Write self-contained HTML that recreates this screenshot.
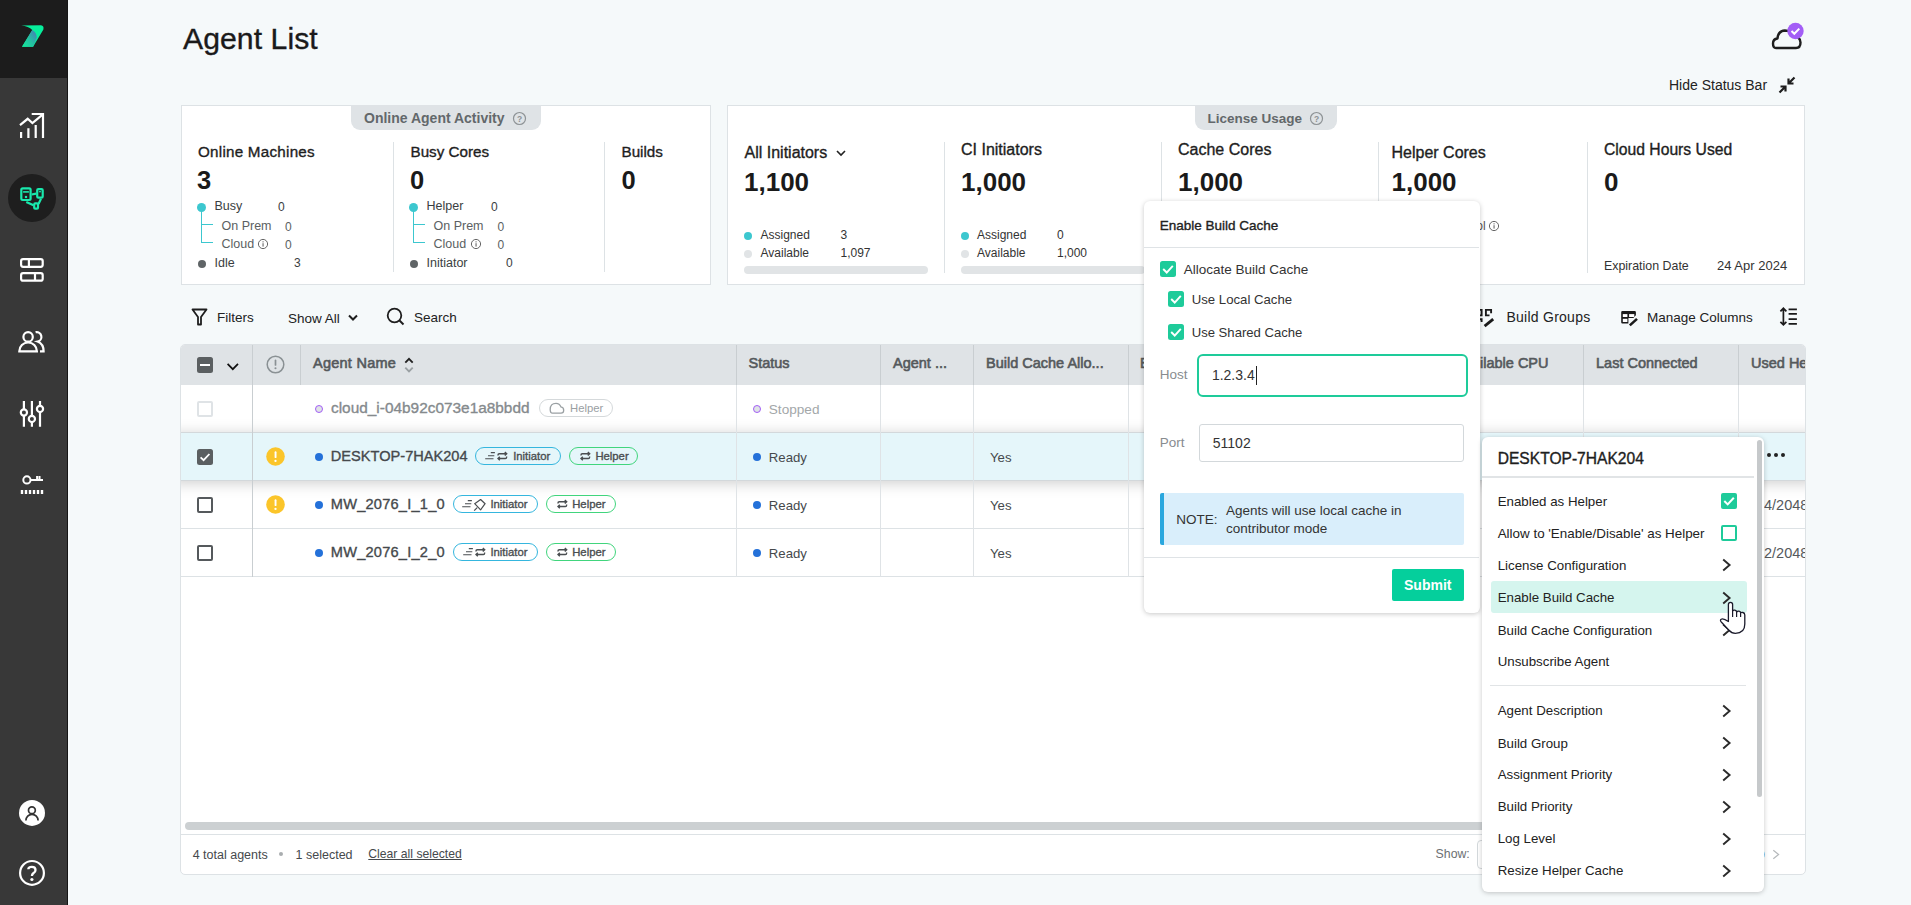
<!DOCTYPE html><html><head><meta charset="utf-8"><style>
html,body{margin:0;padding:0;width:1911px;height:905px;overflow:hidden;background:#f5f9fa;font-family:"Liberation Sans",sans-serif;}
.t{position:absolute;line-height:1;white-space:nowrap;}
.r{position:absolute;box-sizing:border-box;}
</style></head><body>
<div class="r" style="left:0px;top:0px;width:68px;height:905px;background:#383838;"></div>
<div class="r" style="left:67px;top:0px;width:1px;height:905px;background:#151515;"></div>
<div class="r" style="left:0px;top:0px;width:67px;height:78px;background:#1c1c1c;"></div>
<svg class="r" style="left:14px;top:18px;" width="36" height="36" viewBox="0 0 36 36"><defs><linearGradient id="lg" x1="0.1" y1="1" x2="0.9" y2="0.3"><stop offset="0" stop-color="#14e59a"/><stop offset="0.55" stop-color="#25c0a2"/><stop offset="1" stop-color="#3d8fb0"/></linearGradient></defs>
<path d="M7.2 7.4 L27 7.2 Q30.2 7.6 29.4 11.4 L19.1 28.7 L8 28.7 L18.3 11.9 Q14.5 7.9 7.2 7.4 Z" fill="#07ee9c"/>
<path d="M18.3 11.9 Q22.8 14.5 22.8 19.8 L19.1 28.7 L8 28.7 Z" fill="url(#lg)"/></svg>
<svg class="r" style="left:18px;top:110px;" width="28" height="30" viewBox="0 0 28 30"><g fill="none" stroke="#fff" stroke-width="2.2"><path d="M3.1 28 V22.1 M10.4 28 V18.3 M17.7 28 V15 M25 28 V4 M13.7 4 H26.1"/><path d="M2 15.2 L9.7 8.8 L14.4 13 L24.3 4.8" stroke-linejoin="miter"/></g></svg>
<div class="r" style="left:8px;top:174px;width:48px;height:48px;background:#1e1e1e;border-radius:50%;"></div>
<svg class="r" style="left:14px;top:180px;" width="36" height="36" viewBox="0 0 36 36"><g fill="none" stroke="#19e9ad" stroke-width="2.2"><rect x="7.3" y="8.3" width="9.3" height="11.7" rx="1.4"/><rect x="23.2" y="9.1" width="5.5" height="8.5" rx="1.2"/><rect x="20.2" y="23.4" width="3.8" height="5.3" rx="1"/><path d="M17.7 14.5 L22.1 13.7 M12.3 21.9 L19.5 25.3 M27 18.7 L24.5 23.9"/></g><g fill="#19e9ad"><rect x="9.1" y="11.1" width="5.8" height="1.6"/><rect x="10.9" y="15.9" width="2.2" height="2.2"/><rect x="24.9" y="11.1" width="2.1" height="1.2"/></g></svg>
<svg class="r" style="left:14px;top:252px;" width="36" height="36" viewBox="0 0 36 36"><g fill="none" stroke="#fff" stroke-width="2.2"><rect x="7.1" y="7.1" width="21.6" height="7.7" rx="2"/><rect x="7.1" y="21.2" width="21.6" height="7.5" rx="2"/><path d="M14.9 7.1 V14.8 M21 21.2 V28.7"/></g></svg>
<svg class="r" style="left:14px;top:324px;" width="36" height="36" viewBox="0 0 36 36"><g fill="none" stroke="#fff" stroke-width="2.2"><circle cx="14.1" cy="12.9" r="4.7"/><path d="M5.3 27.3 A8.8 8.8 0 0 1 22.9 27.3 Z"/><path d="M21.6 8.2 A4.7 4.7 0 0 1 23.6 17.6 Q29.6 20 29.6 27.3 H26"/></g></svg>
<svg class="r" style="left:14px;top:396px;" width="36" height="36" viewBox="0 0 36 36"><g fill="none" stroke="#fff" stroke-width="2.2"><path d="M9.9 5 V13.4 M9.9 19.6 V30.8 M17.9 5 V19.8 M17.9 26 V30.8 M26 5 V9.8 M26 16 V30.8"/><circle cx="9.9" cy="16.5" r="3.1"/><circle cx="17.9" cy="22.9" r="3.1"/><circle cx="26" cy="12.9" r="3.1"/></g></svg>
<svg class="r" style="left:14px;top:467px;" width="36" height="36" viewBox="0 0 36 36"><g fill="none" stroke="#fff" stroke-width="2"><circle cx="12.9" cy="12.9" r="3.6"/><path d="M16.5 12.9 H29 M23.1 9 V12.9 M25.5 9 V12.9"/></g><path d="M6.8 25 H29.4" stroke="#fff" stroke-width="4" stroke-dasharray="2.4 1.6"/></svg>
<svg class="r" style="left:14px;top:795px;" width="36" height="36" viewBox="0 0 36 36"><circle cx="18" cy="17.9" r="13" fill="#fff"/><g fill="none" stroke="#333" stroke-width="1.7"><circle cx="17.9" cy="15.3" r="3.4"/><path d="M11.9 25.6 A6.1 6.3 0 0 1 24.1 25.6"/></g></svg>
<svg class="r" style="left:14px;top:855px;" width="36" height="36" viewBox="0 0 36 36"><circle cx="18" cy="17.9" r="11.9" fill="none" stroke="#fff" stroke-width="2.2"/><path d="M14.3 14.3 Q14.3 11.8 17.9 11.8 Q21.5 11.8 21.5 14.9 Q21.5 16.8 19.6 18 Q17.9 19.2 17.9 21" fill="none" stroke="#fff" stroke-width="2.3"/><circle cx="17.9" cy="24.5" r="1.6" fill="#fff"/></svg>
<div class="t" style="left:183px;top:24.23px;font-size:30.2px;color:#1a1a1a;font-weight:400;-webkit-text-stroke:0.35px #1a1a1a;letter-spacing:0.05px;">Agent List</div>
<svg class="r" style="left:1771px;top:22px;" width="36" height="28" viewBox="0 0 36 28"><path d="M5 26 Q2 26 2 21.5 Q2 17 6.5 16.5 Q7 9 14 8.5 Q20 8.5 22 14 Q29 14 29.5 20.5 Q29.5 26 25 26 Z" fill="none" stroke="#1e1e1e" stroke-width="2.4" stroke-linejoin="round"/><circle cx="24.5" cy="9" r="8.2" fill="#a35ef6"/><path d="M20.5 9 L23.3 11.8 L28.3 6.6" fill="none" stroke="#fff" stroke-width="2"/></svg>
<div class="t" style="left:1669px;top:77.65px;font-size:14px;color:#222;font-weight:400;">Hide Status Bar</div>
<svg class="r" style="left:1778px;top:76px;" width="18" height="18" viewBox="0 0 18 18"><g fill="none" stroke="#1e1e1e" stroke-width="2.2"><path d="M16.5 1.5 L10.5 7.5 M10.5 2.5 V7.5 H15.5 M1.5 16.5 L7.5 10.5 M2.5 10.5 H7.5 V15.5"/></g></svg>
<div class="r" style="left:181px;top:105px;width:530px;height:180px;background:#fff;border:1px solid #dde2e5;"></div>
<div class="r" style="left:351px;top:105px;width:190px;height:25px;background:#dfe3e6;border-radius:0 0 9px 9px;"></div>
<div class="t" style="left:364px;top:111.15px;font-size:14px;color:#63686b;font-weight:700;">Online Agent Activity</div>
<svg class="r" style="left:512px;top:111px;" width="15" height="15" viewBox="0 0 15 15"><circle cx="7.5" cy="7.5" r="6" fill="none" stroke="#8d9295" stroke-width="1.2"/><text x="7.5" y="10.6" font-size="8.5" text-anchor="middle" fill="#8d9295" font-family="Liberation Sans" font-weight="700">?</text></svg>
<div class="r" style="left:393px;top:142px;width:1px;height:130px;background:#dde2e5;"></div>
<div class="r" style="left:604px;top:142px;width:1px;height:130px;background:#dde2e5;"></div>
<div class="t" style="left:198px;top:144.13px;font-size:15.2px;color:#1e1e1e;font-weight:400;-webkit-text-stroke:0.35px #1e1e1e;letter-spacing:0.25px;">Online Machines</div>
<div class="t" style="left:197px;top:167.91px;font-size:25.5px;color:#1a1a1a;font-weight:700;">3</div>
<div class="r" style="left:197.0px;top:202.5px;width:9px;height:9px;background:#3cc7cf;border-radius:50%;"></div>
<div class="r" style="left:201.0px;top:207px;width:1.3px;height:36px;background:#3cc7cf;"></div>
<div class="r" style="left:201.0px;top:224px;width:12px;height:1.3px;background:#3cc7cf;"></div>
<div class="r" style="left:201.0px;top:242px;width:12px;height:1.3px;background:#3cc7cf;"></div>
<div class="r" style="left:197.5px;top:259.5px;width:8.5px;height:8.5px;background:#5f6466;border-radius:50%;"></div>
<div class="t" style="left:214.5px;top:200.42px;font-size:12.5px;color:#3a3e41;font-weight:400;">Busy</div>
<div class="t" style="left:221.5px;top:220.42px;font-size:12.5px;color:#5b5f62;font-weight:400;">On Prem</div>
<div class="t" style="left:221.5px;top:238.12px;font-size:12.5px;color:#5b5f62;font-weight:400;">Cloud</div>
<div class="t" style="left:214.5px;top:256.92px;font-size:12.5px;color:#3a3e41;font-weight:400;">Idle</div>
<div class="t" style="left:278px;top:201.34px;font-size:12px;color:#3a3e41;font-weight:400;">0</div>
<div class="t" style="left:285px;top:220.84px;font-size:12px;color:#5b5f62;font-weight:400;">0</div>
<div class="t" style="left:285px;top:238.54px;font-size:12px;color:#5b5f62;font-weight:400;">0</div>
<div class="t" style="left:294px;top:257.34px;font-size:12px;color:#3a3e41;font-weight:400;">3</div>
<svg class="r" style="left:257px;top:238px;" width="12" height="12" viewBox="0 0 12 12"><circle cx="6" cy="6" r="4.6" fill="none" stroke="#666" stroke-width="1"/><rect x="5.5" y="5.2" width="1.1" height="3.4" fill="#666"/><rect x="5.5" y="3.3" width="1.1" height="1.1" fill="#666"/></svg>
<div class="t" style="left:410.5px;top:144.13px;font-size:15.2px;color:#1e1e1e;font-weight:400;-webkit-text-stroke:0.35px #1e1e1e;">Busy Cores</div>
<div class="t" style="left:410px;top:167.91px;font-size:25.5px;color:#1a1a1a;font-weight:700;">0</div>
<div class="r" style="left:409.0px;top:202.5px;width:9px;height:9px;background:#3cc7cf;border-radius:50%;"></div>
<div class="r" style="left:413.0px;top:207px;width:1.3px;height:36px;background:#3cc7cf;"></div>
<div class="r" style="left:413.0px;top:224px;width:12px;height:1.3px;background:#3cc7cf;"></div>
<div class="r" style="left:413.0px;top:242px;width:12px;height:1.3px;background:#3cc7cf;"></div>
<div class="r" style="left:409.5px;top:259.5px;width:8.5px;height:8.5px;background:#5f6466;border-radius:50%;"></div>
<div class="t" style="left:426.5px;top:200.42px;font-size:12.5px;color:#3a3e41;font-weight:400;">Helper</div>
<div class="t" style="left:433.5px;top:220.42px;font-size:12.5px;color:#5b5f62;font-weight:400;">On Prem</div>
<div class="t" style="left:433.5px;top:238.12px;font-size:12.5px;color:#5b5f62;font-weight:400;">Cloud</div>
<div class="t" style="left:426.5px;top:256.92px;font-size:12.5px;color:#3a3e41;font-weight:400;">Initiator</div>
<div class="t" style="left:491px;top:201.34px;font-size:12px;color:#3a3e41;font-weight:400;">0</div>
<div class="t" style="left:497.5px;top:220.84px;font-size:12px;color:#5b5f62;font-weight:400;">0</div>
<div class="t" style="left:497.5px;top:238.54px;font-size:12px;color:#5b5f62;font-weight:400;">0</div>
<div class="t" style="left:506px;top:257.34px;font-size:12px;color:#3a3e41;font-weight:400;">0</div>
<svg class="r" style="left:469.5px;top:238px;" width="12" height="12" viewBox="0 0 12 12"><circle cx="6" cy="6" r="4.6" fill="none" stroke="#666" stroke-width="1"/><rect x="5.5" y="5.2" width="1.1" height="3.4" fill="#666"/><rect x="5.5" y="3.3" width="1.1" height="1.1" fill="#666"/></svg>
<div class="t" style="left:621.5px;top:144.13px;font-size:15.2px;color:#1e1e1e;font-weight:400;-webkit-text-stroke:0.35px #1e1e1e;">Builds</div>
<div class="t" style="left:621.5px;top:167.91px;font-size:25.5px;color:#1a1a1a;font-weight:700;">0</div>
<div class="r" style="left:727px;top:105px;width:1078px;height:180px;background:#fff;border:1px solid #dde2e5;"></div>
<div class="r" style="left:1195px;top:105px;width:142px;height:25px;background:#dfe3e6;border-radius:0 0 9px 9px;"></div>
<div class="t" style="left:1207.5px;top:111.57px;font-size:13.5px;color:#63686b;font-weight:700;">License Usage</div>
<svg class="r" style="left:1309px;top:111px;" width="15" height="15" viewBox="0 0 15 15"><circle cx="7.5" cy="7.5" r="6" fill="none" stroke="#8d9295" stroke-width="1.2"/><text x="7.5" y="10.6" font-size="8.5" text-anchor="middle" fill="#8d9295" font-family="Liberation Sans" font-weight="700">?</text></svg>
<div class="r" style="left:944px;top:142px;width:1px;height:131px;background:#dde2e5;"></div>
<div class="r" style="left:1161px;top:142px;width:1px;height:131px;background:#dde2e5;"></div>
<div class="r" style="left:1378px;top:142px;width:1px;height:131px;background:#dde2e5;"></div>
<div class="r" style="left:1587px;top:142px;width:1px;height:131px;background:#dde2e5;"></div>
<div class="t" style="left:744.5px;top:145.25px;font-size:16px;color:#1e1e1e;font-weight:400;-webkit-text-stroke:0.35px #1e1e1e;">All Initiators</div>
<svg class="r" style="left:835px;top:148px;" width="12" height="10" viewBox="0 0 12 10"><path d="M2 3 L6 7 L10 3" fill="none" stroke="#222" stroke-width="1.6"/></svg>
<div class="t" style="left:744px;top:169.49px;font-size:26px;color:#1a1a1a;font-weight:700;">1,100</div>
<div class="t" style="left:961px;top:141.75px;font-size:16px;color:#1e1e1e;font-weight:400;-webkit-text-stroke:0.35px #1e1e1e;">CI Initiators</div>
<div class="t" style="left:961px;top:168.99px;font-size:26px;color:#1a1a1a;font-weight:700;">1,000</div>
<div class="t" style="left:1178px;top:141.75px;font-size:16px;color:#1e1e1e;font-weight:400;-webkit-text-stroke:0.35px #1e1e1e;">Cache Cores</div>
<div class="t" style="left:1178px;top:168.99px;font-size:26px;color:#1a1a1a;font-weight:700;">1,000</div>
<div class="t" style="left:1391.5px;top:145.25px;font-size:16px;color:#1e1e1e;font-weight:400;-webkit-text-stroke:0.35px #1e1e1e;">Helper Cores</div>
<div class="t" style="left:1391.5px;top:168.99px;font-size:26px;color:#1a1a1a;font-weight:700;">1,000</div>
<div class="t" style="left:1604px;top:141.81px;font-size:15.7px;color:#1e1e1e;font-weight:400;-webkit-text-stroke:0.35px #1e1e1e;">Cloud Hours Used</div>
<div class="t" style="left:1604px;top:168.99px;font-size:26px;color:#1a1a1a;font-weight:700;">0</div>
<div class="r" style="left:744.0px;top:231.5px;width:8px;height:8px;background:#3cc7cf;border-radius:50%;"></div>
<div class="r" style="left:744.0px;top:249.5px;width:8px;height:8px;background:#e1e4e6;border-radius:50%;"></div>
<div class="t" style="left:760.5px;top:229.34px;font-size:12px;color:#333;font-weight:400;">Assigned</div>
<div class="t" style="left:760.5px;top:246.84px;font-size:12px;color:#333;font-weight:400;">Available</div>
<div class="t" style="left:840.5px;top:229.34px;font-size:12px;color:#333;font-weight:400;">3</div>
<div class="t" style="left:840.5px;top:246.84px;font-size:12px;color:#333;font-weight:400;">1,097</div>
<div class="r" style="left:744.0px;top:266px;width:184px;height:8px;background:#e1e4e6;border-radius:4px;"></div>
<div class="r" style="left:960.5px;top:231.5px;width:8px;height:8px;background:#3cc7cf;border-radius:50%;"></div>
<div class="r" style="left:960.5px;top:249.5px;width:8px;height:8px;background:#e1e4e6;border-radius:50%;"></div>
<div class="t" style="left:977px;top:229.34px;font-size:12px;color:#333;font-weight:400;">Assigned</div>
<div class="t" style="left:977px;top:246.84px;font-size:12px;color:#333;font-weight:400;">Available</div>
<div class="t" style="left:1057px;top:229.34px;font-size:12px;color:#333;font-weight:400;">0</div>
<div class="t" style="left:1057px;top:246.84px;font-size:12px;color:#333;font-weight:400;">1,000</div>
<div class="r" style="left:960.5px;top:266px;width:184px;height:8px;background:#e1e4e6;border-radius:4px;"></div>
<div class="t" style="left:1604px;top:259.70px;font-size:12.4px;color:#333;font-weight:400;">Expiration Date</div>
<div class="t" style="left:1717px;top:259.19px;font-size:13px;color:#333;font-weight:400;">24 Apr 2024</div>
<div class="t" style="left:1423px;top:220.34px;font-size:12px;color:#555;font-weight:400;">Helper Pool</div>
<svg class="r" style="left:1488px;top:220px;" width="12" height="12" viewBox="0 0 12 12"><circle cx="6" cy="6" r="4.6" fill="none" stroke="#666" stroke-width="1"/><rect x="5.5" y="5.2" width="1.1" height="3.4" fill="#666"/><rect x="5.5" y="3.3" width="1.1" height="1.1" fill="#666"/></svg>
<svg class="r" style="left:191px;top:308px;" width="17" height="18" viewBox="0 0 17 18"><path d="M1.5 1.5 H15.5 L10 9 V16.5 H7 V9 Z" fill="none" stroke="#1e1e1e" stroke-width="1.8" stroke-linejoin="round"/></svg>
<div class="t" style="left:217px;top:311.07px;font-size:13.5px;color:#222;font-weight:400;">Filters</div>
<div class="t" style="left:288px;top:311.87px;font-size:13.5px;color:#222;font-weight:400;">Show All</div>
<svg class="r" style="left:346px;top:312px;" width="14" height="12" viewBox="0 0 14 12"><path d="M3 3.5 L7 7.5 L11 3.5" fill="none" stroke="#1e1e1e" stroke-width="2"/></svg>
<svg class="r" style="left:386px;top:307px;" width="20" height="19" viewBox="0 0 20 19"><circle cx="8.5" cy="8.5" r="6.8" fill="none" stroke="#1e1e1e" stroke-width="1.8"/><path d="M13.5 13.5 L17.5 17.5" stroke="#1e1e1e" stroke-width="2"/></svg>
<div class="t" style="left:414px;top:311.07px;font-size:13.5px;color:#222;font-weight:400;">Search</div>
<svg class="r" style="left:1470px;top:302px;" width="30" height="30" viewBox="0 0 30 30"><g fill="none" stroke="#1a1a1a" stroke-width="1.9"><path d="M9 7.9 H11.6 V13.4 H9 M21.1 11.2 V7.9 H15.9 V13.4 H19.5 M9 17.3 H11.6 V20"/><path d="M14.6 24.2 L23.2 17.2" stroke-width="2.8"/></g></svg>
<div class="t" style="left:1506.5px;top:310.15px;font-size:14px;color:#222;font-weight:400;letter-spacing:0.25px;">Build Groups</div>
<svg class="r" style="left:1614px;top:302px;" width="30" height="30" viewBox="0 0 30 30"><path d="M7.2 10.2 Q7.2 9 8.4 9 H20.7 Q21.9 9 21.9 10.2 V13.2 L19.3 15.9 H14.4 V21.5 H8.4 Q7.2 21.5 7.2 20.3 Z" fill="#1a1a1a"/><g fill="#fff"><rect x="8.8" y="12.1" width="4.6" height="2.9"/><rect x="15.1" y="12.1" width="5.2" height="2.9"/><rect x="8.8" y="16.8" width="4.6" height="3.2"/></g><path d="M15.8 23.4 L23 16.9" stroke="#1a1a1a" stroke-width="2.6"/></svg>
<div class="t" style="left:1647px;top:310.57px;font-size:13.5px;color:#222;font-weight:400;">Manage Columns</div>
<svg class="r" style="left:1774px;top:302px;" width="30" height="30" viewBox="0 0 30 30"><g fill="none" stroke="#1a1a1a" stroke-width="1.7"><path d="M9.4 7 V22.2 M6.4 9.3 L9.4 6.3 L12.4 9.3 M6.4 19.9 L9.4 22.9 L12.4 19.9"/><path d="M14.6 7.3 H22.9 M14.6 11.8 H22.9 M14.6 17.1 H22.9 M14.6 21.9 H22.9" stroke-width="1.8"/></g></svg>
<div class="r" style="left:180px;top:344px;width:1626px;height:531px;background:#fff;border:1px solid #dde2e5;border-radius:5px;"></div>
<div class="r" style="left:181px;top:345px;width:1624px;height:40px;background:#dfe3e6;border-radius:4px 4px 0 0;"></div>
<div class="r" style="left:300px;top:345px;width:1px;height:40px;background:#c9ced1;"></div>
<div class="r" style="left:736px;top:345px;width:1px;height:40px;background:#c9ced1;"></div>
<div class="r" style="left:880px;top:345px;width:1px;height:40px;background:#c9ced1;"></div>
<div class="r" style="left:973px;top:345px;width:1px;height:40px;background:#c9ced1;"></div>
<div class="r" style="left:1128px;top:345px;width:1px;height:40px;background:#c9ced1;"></div>
<div class="r" style="left:1583px;top:345px;width:1px;height:40px;background:#c9ced1;"></div>
<div class="r" style="left:1738px;top:345px;width:1px;height:40px;background:#c9ced1;"></div>
<div class="r" style="left:197px;top:357px;width:16px;height:16px;background:#5b5f61;border-radius:2.5px;"></div>
<div class="r" style="left:200px;top:364px;width:10px;height:2.4px;background:#fff;"></div>
<svg class="r" style="left:226px;top:360px;" width="14" height="12" viewBox="0 0 14 12"><path d="M1.6 3.8 L6.8 9.2 L12 3.8" fill="none" stroke="#111" stroke-width="1.7"/></svg>
<div class="r" style="left:252px;top:345px;width:1px;height:40px;background:#c9ced1;"></div>
<svg class="r" style="left:265px;top:354px;" width="21" height="21" viewBox="0 0 21 21"><circle cx="10.5" cy="10.5" r="8.3" fill="none" stroke="#8a9194" stroke-width="1.5"/><rect x="9.65" y="5.6" width="1.7" height="6.2" rx="0.85" fill="#8a9194"/><circle cx="10.5" cy="14.3" r="1.05" fill="#8a9194"/></svg>
<div class="t" style="left:313px;top:355.92px;font-size:14.5px;color:#55595c;font-weight:400;-webkit-text-stroke:0.6px #55595c;letter-spacing:0.25px;">Agent Name</div>
<svg class="r" style="left:403px;top:355px;" width="12" height="18" viewBox="0 0 12 18"><path d="M2.3 7.6 L6 3.9 L9.7 7.6" fill="none" stroke="#222" stroke-width="1.9"/><path d="M2.3 12.6 L6 16.3 L9.7 12.6" fill="none" stroke="#9aa0a3" stroke-width="1.9"/></svg>
<div class="t" style="left:748.5px;top:355.92px;font-size:14.5px;color:#55595c;font-weight:400;-webkit-text-stroke:0.6px #55595c;">Status</div>
<div class="t" style="left:893px;top:355.92px;font-size:14.5px;color:#55595c;font-weight:400;-webkit-text-stroke:0.6px #55595c;">Agent ...</div>
<div class="t" style="left:986px;top:355.92px;font-size:14.5px;color:#55595c;font-weight:400;-webkit-text-stroke:0.6px #55595c;">Build Cache Allo...</div>
<div class="t" style="left:1140px;top:355.92px;font-size:14.5px;color:#55595c;font-weight:400;-webkit-text-stroke:0.6px #55595c;">B</div>
<div class="t" style="left:1480px;top:355.92px;font-size:14.5px;color:#55595c;font-weight:400;-webkit-text-stroke:0.6px #55595c;">ilable CPU</div>
<div class="t" style="left:1596px;top:355.92px;font-size:14.5px;color:#55595c;font-weight:400;-webkit-text-stroke:0.6px #55595c;">Last Connected</div>
<div class="r" style="left:1738px;top:345px;width:67px;height:40px;overflow:hidden;"><div class="t" style="left:13px;top:10.9px;font-size:14.5px;color:#55595c;-webkit-text-stroke:0.6px #55595c;">Used Helper</div></div>
<div style="position:absolute;left:0;top:0;width:1911px;height:905px;clip-path:inset(385px 106px 31px 181px);">
<div class="r" style="left:181px;top:385px;width:1624px;height:48px;background:#fff;"></div>
<div class="r" style="left:181px;top:432px;width:1624px;height:1px;background:#dde2e5;"></div>
<div class="r" style="left:181px;top:480px;width:1624px;height:1px;background:#dde2e5;"></div>
<div class="r" style="left:181px;top:528px;width:1624px;height:1px;background:#dde2e5;"></div>
<div class="r" style="left:181px;top:576px;width:1624px;height:1px;background:#dde2e5;"></div>
<div class="r" style="left:171px;top:433px;width:1644px;height:47px;background:#e5f6fa;box-shadow:0 2px 14px 1px rgba(0,0,0,0.2);"></div>
<div class="r" style="left:171px;top:432px;width:1644px;height:1px;background:#d3d8db;"></div>
<div class="r" style="left:171px;top:480px;width:1644px;height:1px;background:#d3d8db;"></div>
<div class="r" style="left:252px;top:385px;width:1px;height:192px;background:#c9ced1;"></div>
<div class="r" style="left:736px;top:385px;width:1px;height:192px;background:#dfe3e6;"></div>
<div class="r" style="left:880px;top:385px;width:1px;height:192px;background:#dfe3e6;"></div>
<div class="r" style="left:973px;top:385px;width:1px;height:192px;background:#dfe3e6;"></div>
<div class="r" style="left:1128px;top:385px;width:1px;height:192px;background:#dfe3e6;"></div>
<div class="r" style="left:1583px;top:385px;width:1px;height:192px;background:#dfe3e6;"></div>
<div class="r" style="left:1738px;top:385px;width:1px;height:192px;background:#dfe3e6;"></div>
<div class="r" style="left:197px;top:401px;width:16px;height:16px;border:2px solid #dfe3e6;border-radius:2px;background:#fff;"></div>
<div class="r" style="left:315px;top:405px;width:8px;height:8px;background:#dfe3e6;border:1.5px solid #a35ef6;border-radius:50%;"></div>
<div class="t" style="left:331px;top:400.26px;font-size:15.4px;color:#858a8d;font-weight:400;-webkit-text-stroke:0.35px #858a8d;">cloud_i-04b92c073e1a8bbdd</div>
<div class="r" style="left:539.2px;top:399.2px;width:73.4px;height:17.8px;border:1.3px solid #d5d9db;border-radius:9px;"></div>
<div class="t" style="left:570px;top:403.03px;font-size:11.3px;color:#9aa0a3;font-weight:400;">Helper</div>
<svg class="r" style="left:549px;top:401.5px;" width="16" height="13" viewBox="0 0 16 13"><path d="M3.6 11.2 Q1.2 11 1.2 7.4 Q1.2 1.3 7 1.3 Q10.6 1.3 11.9 4.9 Q14.7 5.3 14.7 8.3 Q14.7 11.2 12 11.2 Z" fill="none" stroke="#9aa0a3" stroke-width="1.3"/></svg>
<div class="r" style="left:752.5px;top:405px;width:8px;height:8px;background:#dfe3e6;border:1.5px solid #a35ef6;border-radius:50%;"></div>
<div class="t" style="left:768.8px;top:402.68px;font-size:13.6px;color:#a3a7a9;font-weight:400;">Stopped</div>
<div class="r" style="left:197px;top:449px;width:16px;height:16px;background:#5b5f61;border-radius:2.5px;"></div>
<svg class="r" style="left:197px;top:449px;" width="16" height="16" viewBox="0 0 16 16"><path d="M3.6 8.3 L6.6 11.2 L12.4 5" fill="none" stroke="#fff" stroke-width="1.8"/></svg>
<svg class="r" style="left:265.9px;top:446.5px;" width="19" height="19" viewBox="0 0 19 19"><circle cx="9.5" cy="9.5" r="9.3" fill="#fbc52a"/><rect x="8.6" y="4.3" width="1.9" height="6.8" rx="0.9" fill="#fff"/><circle cx="9.5" cy="13.9" r="1.15" fill="#fff"/></svg>
<div class="r" style="left:315px;top:453px;width:8px;height:8px;background:#2471d9;border-radius:50%;"></div>
<div class="t" style="left:330.8px;top:449.14px;font-size:14.6px;color:#45494c;font-weight:400;-webkit-text-stroke:0.35px #45494c;">DESKTOP-7HAK204</div>
<div class="r" style="left:475px;top:447.4px;width:85.70000000000005px;height:17.8px;border:1.3px solid #35b6de;border-radius:9px;"></div>
<div class="t" style="left:513.2px;top:450.73px;font-size:11.3px;color:#4a4e51;font-weight:400;-webkit-text-stroke:0.35px #4a4e51;">Initiator</div>
<svg class="r" style="left:484.6px;top:451.9px;" width="11" height="9" viewBox="0 0 11 9"><g stroke="#4a4e51" stroke-width="1.1"><path d="M5.8 0.6 H9.9 M3 3.7 H9.3 M0.2 6.8 H8.5"/></g></svg>
<svg class="r" style="left:497px;top:451.4px;" width="11" height="10" viewBox="0 0 11 10"><g fill="none" stroke="#4a4e51" stroke-width="1.4"><path d="M1 4.6 V3.9 Q1 2.8 2.2 2.8 H9.6 M7.8 1 L9.7 2.8 L7.8 4.6 M9.6 5.4 V6.3 Q9.6 7.5 8.4 7.5 H1 M2.8 5.7 L0.9 7.5 L2.8 9.3"/></g></svg>
<div class="r" style="left:569.4px;top:447.4px;width:69.10000000000002px;height:17.8px;border:1.3px solid #41d57d;border-radius:9px;"></div>
<div class="t" style="left:595.4px;top:450.73px;font-size:11.3px;color:#4a4e51;font-weight:400;-webkit-text-stroke:0.35px #4a4e51;">Helper</div>
<svg class="r" style="left:580.0px;top:451.4px;" width="11" height="10" viewBox="0 0 11 10"><g fill="none" stroke="#4a4e51" stroke-width="1.4"><path d="M1 4.6 V3.9 Q1 2.8 2.2 2.8 H9.6 M7.8 1 L9.7 2.8 L7.8 4.6 M9.6 5.4 V6.3 Q9.6 7.5 8.4 7.5 H1 M2.8 5.7 L0.9 7.5 L2.8 9.3"/></g></svg>
<div class="r" style="left:752.5px;top:453px;width:8px;height:8px;background:#2471d9;border-radius:50%;"></div>
<div class="t" style="left:768.8px;top:451.32px;font-size:13.2px;color:#45494c;font-weight:400;">Ready</div>
<div class="t" style="left:990px;top:451.32px;font-size:13.2px;color:#45494c;font-weight:400;">Yes</div>
<div class="r" style="left:197px;top:497px;width:16px;height:16px;border:2px solid #55595c;border-radius:2px;background:#fff;"></div>
<svg class="r" style="left:265.9px;top:494.5px;" width="19" height="19" viewBox="0 0 19 19"><circle cx="9.5" cy="9.5" r="9.3" fill="#fbc52a"/><rect x="8.6" y="4.3" width="1.9" height="6.8" rx="0.9" fill="#fff"/><circle cx="9.5" cy="13.9" r="1.15" fill="#fff"/></svg>
<div class="r" style="left:315px;top:501px;width:8px;height:8px;background:#2471d9;border-radius:50%;"></div>
<div class="t" style="left:330.8px;top:497.14px;font-size:14.6px;color:#45494c;font-weight:400;-webkit-text-stroke:0.35px #45494c;letter-spacing:0.22px;">MW_2076_I_1_0</div>
<div class="r" style="left:453.1px;top:495.4px;width:84.79999999999995px;height:17.8px;border:1.3px solid #35b6de;border-radius:9px;"></div>
<div class="t" style="left:490.4px;top:498.73px;font-size:11.3px;color:#4a4e51;font-weight:400;-webkit-text-stroke:0.35px #4a4e51;">Initiator</div>
<svg class="r" style="left:462.3px;top:500.4px;" width="11" height="9" viewBox="0 0 11 9"><g stroke="#4a4e51" stroke-width="1.1"><path d="M5.8 0.6 H9.9 M3 3.7 H9.3 M0.2 6.8 H8.5"/></g></svg>
<svg class="r" style="left:473.1px;top:497.9px;" width="14" height="14" viewBox="0 0 14 14"><g fill="none" stroke="#4a4e51" stroke-width="1.2" stroke-linejoin="round"><path d="M7.6 1.5 L12.1 5.7 L7.6 11.8 L1.7 5.7 Z M4.2 9.6 L1.2 12.6"/></g></svg>
<div class="r" style="left:546.2px;top:495.4px;width:69.59999999999991px;height:17.8px;border:1.3px solid #41d57d;border-radius:9px;"></div>
<div class="t" style="left:572.2px;top:498.73px;font-size:11.3px;color:#4a4e51;font-weight:400;-webkit-text-stroke:0.35px #4a4e51;">Helper</div>
<svg class="r" style="left:556.8000000000001px;top:499.4px;" width="11" height="10" viewBox="0 0 11 10"><g fill="none" stroke="#4a4e51" stroke-width="1.4"><path d="M1 4.6 V3.9 Q1 2.8 2.2 2.8 H9.6 M7.8 1 L9.7 2.8 L7.8 4.6 M9.6 5.4 V6.3 Q9.6 7.5 8.4 7.5 H1 M2.8 5.7 L0.9 7.5 L2.8 9.3"/></g></svg>
<div class="r" style="left:752.5px;top:501px;width:8px;height:8px;background:#2471d9;border-radius:50%;"></div>
<div class="t" style="left:768.8px;top:499.32px;font-size:13.2px;color:#45494c;font-weight:400;">Ready</div>
<div class="t" style="left:990px;top:499.32px;font-size:13.2px;color:#45494c;font-weight:400;">Yes</div>
<div class="r" style="left:197px;top:545px;width:16px;height:16px;border:2px solid #55595c;border-radius:2px;background:#fff;"></div>
<div class="r" style="left:315px;top:549px;width:8px;height:8px;background:#2471d9;border-radius:50%;"></div>
<div class="t" style="left:330.8px;top:545.14px;font-size:14.6px;color:#45494c;font-weight:400;-webkit-text-stroke:0.35px #45494c;letter-spacing:0.22px;">MW_2076_I_2_0</div>
<div class="r" style="left:453.1px;top:543.4px;width:84.79999999999995px;height:17.8px;border:1.3px solid #35b6de;border-radius:9px;"></div>
<div class="t" style="left:490.4px;top:546.73px;font-size:11.3px;color:#4a4e51;font-weight:400;-webkit-text-stroke:0.35px #4a4e51;">Initiator</div>
<svg class="r" style="left:462.70000000000005px;top:547.9px;" width="11" height="9" viewBox="0 0 11 9"><g stroke="#4a4e51" stroke-width="1.1"><path d="M5.8 0.6 H9.9 M3 3.7 H9.3 M0.2 6.8 H8.5"/></g></svg>
<svg class="r" style="left:475.1px;top:547.4px;" width="11" height="10" viewBox="0 0 11 10"><g fill="none" stroke="#4a4e51" stroke-width="1.4"><path d="M1 4.6 V3.9 Q1 2.8 2.2 2.8 H9.6 M7.8 1 L9.7 2.8 L7.8 4.6 M9.6 5.4 V6.3 Q9.6 7.5 8.4 7.5 H1 M2.8 5.7 L0.9 7.5 L2.8 9.3"/></g></svg>
<div class="r" style="left:546.2px;top:543.4px;width:69.59999999999991px;height:17.8px;border:1.3px solid #41d57d;border-radius:9px;"></div>
<div class="t" style="left:572.2px;top:546.73px;font-size:11.3px;color:#4a4e51;font-weight:400;-webkit-text-stroke:0.35px #4a4e51;">Helper</div>
<svg class="r" style="left:556.8000000000001px;top:547.4px;" width="11" height="10" viewBox="0 0 11 10"><g fill="none" stroke="#4a4e51" stroke-width="1.4"><path d="M1 4.6 V3.9 Q1 2.8 2.2 2.8 H9.6 M7.8 1 L9.7 2.8 L7.8 4.6 M9.6 5.4 V6.3 Q9.6 7.5 8.4 7.5 H1 M2.8 5.7 L0.9 7.5 L2.8 9.3"/></g></svg>
<div class="r" style="left:752.5px;top:549px;width:8px;height:8px;background:#2471d9;border-radius:50%;"></div>
<div class="t" style="left:768.8px;top:547.32px;font-size:13.2px;color:#45494c;font-weight:400;">Ready</div>
<div class="t" style="left:990px;top:547.32px;font-size:13.2px;color:#45494c;font-weight:400;">Yes</div>
<div class="t" style="left:1764px;top:497.72px;font-size:14.5px;color:#55595c;font-weight:400;">4/2048</div>
<div class="t" style="left:1764px;top:545.72px;font-size:14.5px;color:#55595c;font-weight:400;">2/2048</div>
<svg class="r" style="left:1766px;top:450px;" width="20" height="10" viewBox="0 0 20 10"><circle cx="3" cy="5" r="2" fill="#222"/><circle cx="10" cy="5" r="2" fill="#222"/><circle cx="17" cy="5" r="2" fill="#222"/></svg>
</div>
<div class="r" style="left:185px;top:822px;width:1400px;height:8px;background:#ccd0d2;border-radius:4px;"></div>
<div class="r" style="left:181px;top:834px;width:1624px;height:1px;background:#dde2e5;"></div>
<div class="t" style="left:192.7px;top:848.62px;font-size:12.5px;color:#45494c;font-weight:400;">4 total agents</div>
<div class="r" style="left:279px;top:852px;width:4.2px;height:4.2px;background:#a9adaf;border-radius:50%;"></div>
<div class="t" style="left:295.6px;top:848.62px;font-size:12.5px;color:#45494c;font-weight:400;">1 selected</div>
<div class="t" style="left:368.3px;top:847.97px;font-size:12.2px;color:#45494c;font-weight:400;text-decoration:underline;">Clear all selected</div>
<div class="t" style="left:1435.6px;top:847.59px;font-size:12.3px;color:#6b6f72;font-weight:400;">Show:</div>
<div class="r" style="left:1476.5px;top:839.5px;width:120px;height:29.5px;border:1px solid #d3d8db;border-radius:4px;background:#fff;"></div>
<div class="t" style="left:1757.5px;top:847.99px;font-size:13px;color:#333;font-weight:400;">0</div>
<svg class="r" style="left:1770px;top:848px;" width="10" height="13" viewBox="0 0 10 13"><path d="M3.3 2.2 L8.6 6.5 L3.3 10.7" fill="none" stroke="#b5b9bb" stroke-width="1.2"/></svg>
<div class="r" style="left:1144px;top:201px;width:336px;height:412px;background:#fff;border-radius:6px;box-shadow:0 1px 5px rgba(0,0,0,0.22);"></div>
<div class="t" style="left:1159.7px;top:219.27px;font-size:13.5px;color:#222;font-weight:400;-webkit-text-stroke:0.35px #222;">Enable Build Cache</div>
<div class="r" style="left:1144px;top:246.5px;width:335px;height:1px;background:#dfe3e6;"></div>
<div class="r" style="left:1160px;top:261px;width:16px;height:16px;background:#1ecb9a;border-radius:2.5px;"></div>
<svg class="r" style="left:1160px;top:261px;" width="16" height="16" viewBox="0 0 16 16"><path d="M3.2 8.0 L6.72 11.52 L12.8 4.8" fill="none" stroke="#fff" stroke-width="1.9"/></svg>
<div class="t" style="left:1183.7px;top:262.57px;font-size:13.5px;color:#333;font-weight:400;">Allocate Build Cache</div>
<div class="r" style="left:1168px;top:291px;width:16px;height:16px;background:#1ecb9a;border-radius:2.5px;"></div>
<svg class="r" style="left:1168px;top:291px;" width="16" height="16" viewBox="0 0 16 16"><path d="M3.2 8.0 L6.72 11.52 L12.8 4.8" fill="none" stroke="#fff" stroke-width="1.9"/></svg>
<div class="t" style="left:1191.7px;top:293.02px;font-size:13.2px;color:#333;font-weight:400;">Use Local Cache</div>
<div class="r" style="left:1168px;top:324px;width:16px;height:16px;background:#1ecb9a;border-radius:2.5px;"></div>
<svg class="r" style="left:1168px;top:324px;" width="16" height="16" viewBox="0 0 16 16"><path d="M3.2 8.0 L6.72 11.52 L12.8 4.8" fill="none" stroke="#fff" stroke-width="1.9"/></svg>
<div class="t" style="left:1191.7px;top:325.91px;font-size:13.1px;color:#333;font-weight:400;">Use Shared Cache</div>
<div class="t" style="left:1159.7px;top:368.17px;font-size:13.5px;color:#888c8f;font-weight:400;">Host</div>
<div class="r" style="left:1196.5px;top:353.5px;width:271px;height:43px;border:2px solid #1ecb9a;border-radius:6px;background:#fff;"></div>
<div class="t" style="left:1211.9px;top:367.75px;font-size:14px;color:#333;font-weight:400;">1.2.3.4</div>
<div class="r" style="left:1256px;top:366px;width:1.2px;height:19px;background:#222;"></div>
<div class="t" style="left:1159.7px;top:436.27px;font-size:13.5px;color:#888c8f;font-weight:400;">Port</div>
<div class="r" style="left:1199px;top:424px;width:265px;height:37.5px;border:1px solid #d3d8db;border-radius:3px;background:#fff;"></div>
<div class="t" style="left:1212.8px;top:435.85px;font-size:14px;color:#333;font-weight:400;">51102</div>
<div class="r" style="left:1160px;top:493px;width:304px;height:52px;background:#d9eefb;border-left:4px solid #2aa7de;border-radius:2px;"></div>
<div class="t" style="left:1176.2px;top:513.17px;font-size:13.5px;color:#333;font-weight:400;">NOTE:</div>
<div class="t" style="left:1226px;top:503.77px;font-size:13.5px;color:#333;font-weight:400;">Agents will use local cache in</div>
<div class="t" style="left:1226px;top:521.57px;font-size:13.5px;color:#333;font-weight:400;">contributor mode</div>
<div class="r" style="left:1144px;top:556.5px;width:335px;height:1px;background:#dfe3e6;"></div>
<div class="r" style="left:1392px;top:569px;width:72px;height:31.5px;background:#05cf9c;border-radius:2px;"></div>
<div class="t" style="left:1404px;top:578.15px;font-size:14px;color:#fff;font-weight:700;">Submit</div>
<div class="r" style="left:1482px;top:437px;width:282px;height:455px;background:#fff;border-radius:6px;box-shadow:0 1px 5px rgba(0,0,0,0.22);"></div>
<div class="r" style="left:1756.5px;top:440px;width:5px;height:357px;background:#c6c9cb;border-radius:3px;"></div>
<div class="t" style="left:1497.7px;top:450.79px;font-size:15.6px;color:#1e1e1e;font-weight:400;-webkit-text-stroke:0.35px #1e1e1e;">DESKTOP-7HAK204</div>
<div class="r" style="left:1482px;top:475.5px;width:272px;height:2px;background:#e1e4e6;"></div>
<div class="t" style="left:1497.7px;top:495.14px;font-size:13.3px;color:#222;font-weight:400;">Enabled as Helper</div>
<div class="r" style="left:1721px;top:493px;width:16px;height:16px;background:#1ecb9a;border-radius:2px;"></div>
<svg class="r" style="left:1721px;top:493px;" width="16" height="16" viewBox="0 0 16 16"><path d="M3.3 8 L6.7 11.4 L12.8 4.8" fill="none" stroke="#fff" stroke-width="2"/></svg>
<div class="t" style="left:1497.7px;top:526.95px;font-size:13.4px;color:#222;font-weight:400;">Allow to &#39;Enable/Disable&#39; as Helper</div>
<div class="r" style="left:1721px;top:525px;width:16px;height:16px;border:2px solid #1ecb9a;border-radius:2px;"></div>
<div class="r" style="left:1490.5px;top:581px;width:256px;height:31.5px;background:#d5f5ee;border-radius:3px;"></div>
<div class="t" style="left:1497.7px;top:558.74px;font-size:13.3px;color:#222;font-weight:400;">License Configuration</div>
<svg class="r" style="left:1720px;top:557.2px;" width="12" height="16" viewBox="0 0 12 16"><path d="M3.2 2.5 L9.6 8 L3.2 13.5" fill="none" stroke="#2a2a2a" stroke-width="1.9"/></svg>
<div class="t" style="left:1497.7px;top:591.34px;font-size:13.3px;color:#222;font-weight:400;">Enable Build Cache</div>
<svg class="r" style="left:1720px;top:589.8000000000001px;" width="12" height="16" viewBox="0 0 12 16"><path d="M3.2 2.5 L9.6 8 L3.2 13.5" fill="none" stroke="#2a2a2a" stroke-width="1.9"/></svg>
<div class="t" style="left:1497.7px;top:623.54px;font-size:13.3px;color:#222;font-weight:400;">Build Cache Configuration</div>
<svg class="r" style="left:1720px;top:622.0px;" width="12" height="16" viewBox="0 0 12 16"><path d="M3.2 2.5 L9.6 8 L3.2 13.5" fill="none" stroke="#2a2a2a" stroke-width="1.9"/></svg>
<div class="t" style="left:1497.7px;top:655.04px;font-size:13.3px;color:#222;font-weight:400;">Unsubscribe Agent</div>
<div class="t" style="left:1497.7px;top:704.24px;font-size:13.3px;color:#222;font-weight:400;">Agent Description</div>
<svg class="r" style="left:1720px;top:702.7px;" width="12" height="16" viewBox="0 0 12 16"><path d="M3.2 2.5 L9.6 8 L3.2 13.5" fill="none" stroke="#2a2a2a" stroke-width="1.9"/></svg>
<div class="t" style="left:1497.7px;top:736.54px;font-size:13.3px;color:#222;font-weight:400;">Build Group</div>
<svg class="r" style="left:1720px;top:735.0px;" width="12" height="16" viewBox="0 0 12 16"><path d="M3.2 2.5 L9.6 8 L3.2 13.5" fill="none" stroke="#2a2a2a" stroke-width="1.9"/></svg>
<div class="t" style="left:1497.7px;top:768.34px;font-size:13.3px;color:#222;font-weight:400;">Assignment Priority</div>
<svg class="r" style="left:1720px;top:766.8000000000001px;" width="12" height="16" viewBox="0 0 12 16"><path d="M3.2 2.5 L9.6 8 L3.2 13.5" fill="none" stroke="#2a2a2a" stroke-width="1.9"/></svg>
<div class="t" style="left:1497.7px;top:800.24px;font-size:13.3px;color:#222;font-weight:400;">Build Priority</div>
<svg class="r" style="left:1720px;top:798.7px;" width="12" height="16" viewBox="0 0 12 16"><path d="M3.2 2.5 L9.6 8 L3.2 13.5" fill="none" stroke="#2a2a2a" stroke-width="1.9"/></svg>
<div class="t" style="left:1497.7px;top:832.04px;font-size:13.3px;color:#222;font-weight:400;">Log Level</div>
<svg class="r" style="left:1720px;top:830.5px;" width="12" height="16" viewBox="0 0 12 16"><path d="M3.2 2.5 L9.6 8 L3.2 13.5" fill="none" stroke="#2a2a2a" stroke-width="1.9"/></svg>
<div class="t" style="left:1497.7px;top:864.24px;font-size:13.3px;color:#222;font-weight:400;">Resize Helper Cache</div>
<svg class="r" style="left:1720px;top:862.7px;" width="12" height="16" viewBox="0 0 12 16"><path d="M3.2 2.5 L9.6 8 L3.2 13.5" fill="none" stroke="#2a2a2a" stroke-width="1.9"/></svg>
<div class="r" style="left:1490px;top:684.5px;width:256px;height:1.5px;background:#e1e4e6;"></div>
<svg class="r" style="left:1705px;top:585px;" width="50" height="55" viewBox="0 0 50 55"><path d="M23.4 36.5 V19.5 Q23.4 17.3 25.5 17.3 Q27.6 17.3 27.6 19.5 V25.8 Q28.2 25 29.8 25.2 Q31.6 25.5 31.6 27 Q32.4 26 34 26.1 Q35.6 26.3 35.6 27.9 Q36.4 27.1 37.9 27.5 Q39.8 28 39.8 30 V39 Q39.8 48.3 30.4 48.3 Q26.5 48.3 23.7 45 L16.5 37.3 Q14.6 35.2 16.2 34.2 Q18.3 33 23.4 36.5 Z" fill="#fff" stroke="#1a1a2a" stroke-width="1.3" stroke-linejoin="round"/><path d="M27.6 25.8 V32 M31.6 27 V32 M35.6 27.9 V32" stroke="#1a1a2a" stroke-width="1.2"/></svg>
</body></html>
